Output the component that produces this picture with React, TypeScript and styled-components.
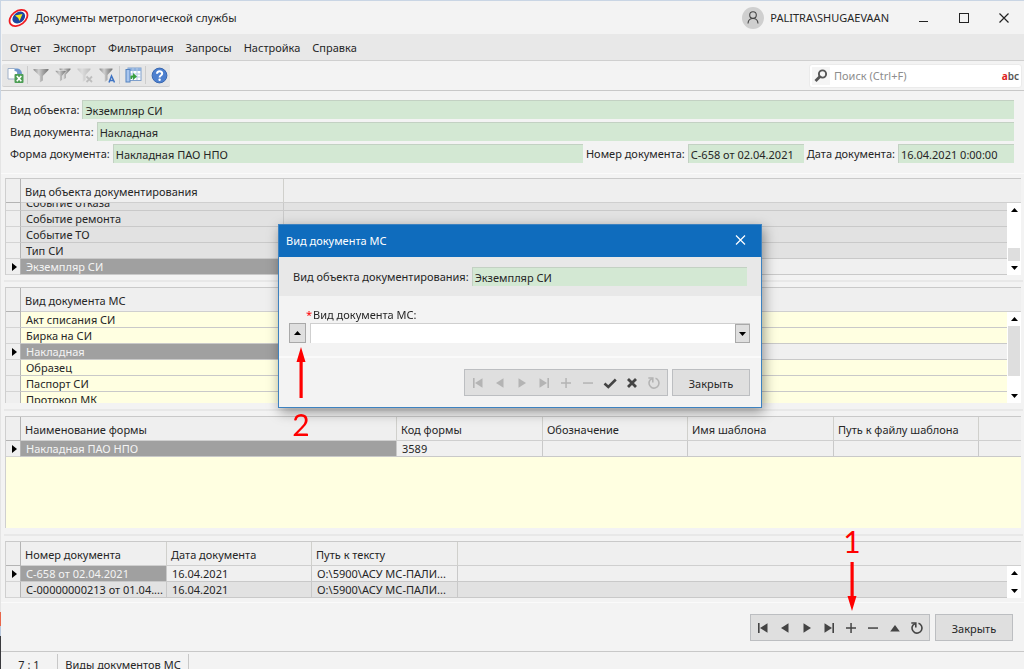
import React, { useLayoutEffect, useRef } from "react";
import styled, { createGlobalStyle, css } from "styled-components";

const font = `"Noto Sans", "Open Sans", sans-serif`;

const Global = createGlobalStyle`
  * { box-sizing: border-box; }
  html, body { margin: 0; padding: 0; height: 100%; overflow: hidden; }
  body { background: #f3f3f3; font-family: ${font}; font-size: 11px; line-height: 16px; color: #262626; }
  button, input, select { font: inherit; color: inherit; margin: 0; padding: 0; border: 0; border-radius: 0; background: none; outline: none; }
`;

const Desktop = styled.div`
  height: 100vh;
  overflow: hidden;
  position: relative;
  padding: 1px 0 0 1px;
  background: linear-gradient(#c9d5e4 0 100px, #e4e4e4 100px 612px, #e8664a 612px 626px, #b9c8dc 626px 636px, #3a3a3e 636px);
`;

const TopEdge = styled.div`
  position: absolute;
  inset: 0 0 auto 0;
  height: 1px;
  background: #c9d5e4;
`;

const Window = styled.div`
  display: flex;
  flex-direction: column;
  min-height: 100%;
  background: #f3f3f3;
  & > * { flex-shrink: 0; }
`;

const TitleBar = styled.header`
  display: flex;
  align-items: center;
  height: 33px;
  padding-left: 7px;
`;

const Title = styled.h1`
  margin: 0 auto 0 6px;
  font-size: 11px;
  font-weight: 400;
`;

const Avatar = styled.span`
  display: grid;
  place-items: center;
  width: 22px;
  height: 22px;
  margin-right: 6px;
  border-radius: 50%;
  background: #cfcfcf;
`;

const CaptionButton = styled.button`
  display: grid;
  place-items: center;
  width: 40px;
  height: 32px;
`;

const CaptionButtons = styled.div`
  display: flex;
  margin-left: 15px;
`;

const MenuBar = styled.nav`
  display: flex;
  align-items: center;
  gap: 12px;
  height: 27px;
  margin-left: 1px;
  padding: 2px 8px 0;
  background: #e8e8e8;
  border-bottom: 1px solid #cfcfcf;
  button { line-height: 20px; }
`;

const ToolRow = styled.div`
  display: flex;
  justify-content: space-between;
  align-items: center;
  height: 30px;
  padding: 0 2px 0 1px;
  border-bottom: 1px solid #c8c8c8;
`;

const ToolGroup = styled.div`
  display: flex;
  align-items: center;
  height: 23px;
  width: 168px;
  padding-left: 2px;
  border-radius: 2px;
  background: #e6e6e6;
  border-bottom: 1px solid #d0d0d0;
`;

const ToolButton = styled.button`
  display: grid;
  place-items: center;
  width: 22px;
  height: 22px;
  svg { display: block; }
`;

const ToolDivider = styled.span`
  width: 1px;
  height: 18px;
  margin: 0 2px 0 1px;
  background: #cdcdcd;
`;

const SearchBox = styled.label`
  display: flex;
  align-items: center;
  width: 213px;
  height: 24px;
  padding: 0 2px;
  border-radius: 3px;
  background: #fff;
  border: 1px solid #ebebeb;
`;

const SearchGlyph = styled.span`
  display: grid;
  place-items: center;
  width: 18px;
  height: 18px;
  margin-right: 4px;
  background: #f5f5f5;
`;

const SearchInput = styled.input`
  flex: 1;
  min-width: 0;
  height: 20px;
  &::placeholder { color: #8d8d8d; opacity: 1; }
`;

const Abc = styled.span`
  font-size: 10px;
  font-weight: 600;
  color: #555;
  b { color: #e02020; font-weight: 700; }
`;

const Summary = styled.section`
  display: flex;
  flex-direction: column;
  gap: 3px;
  height: 83px;
  padding: 9px 10px 0 9px;
  border-bottom: 1px solid #fafafa;
`;

const SummaryGap = styled.div`
  height: 4px;
`;

const FieldLine = styled.div`
  display: flex;
  gap: 3px;
`;

const FieldLabel = styled.label`
  height: 19px;
  line-height: 20px;
  white-space: nowrap;
`;

const ReadField = styled.input<{ $w?: number }>`
  ${(p) => (p.$w ? css`width: ${p.$w}px;` : css`flex: 1;`)}
  min-width: 0;
  height: 19px;
  padding: 0 2px;
  line-height: 16px;
  background: #d3e8d3;
  border: solid #c3d1c3;
  border-width: 1px 0 0 1px;
`;

const Splitter = styled.div<{ $h: number }>`
  display: flex;
  align-items: center;
  height: ${(p) => p.$h}px;
  padding: 0 1px 0 3px;
  &::after { content: ""; flex: 1; height: 2px; background: #e8e8e8; }
`;

const GridFrame = styled.section<{ $h: number; $grow?: boolean }>`
  display: flex;
  height: ${(p) => p.$h}px;
  ${(p) => p.$grow && css`flex: 1 0 ${p.$h}px;`}
  margin: 0 3px 0 4px;
  border-top: 1px solid #c9c9c9;
  border-left: 1px solid #cfcfcf;
`;

const GridView = styled.div<{ $bg: string }>`
  flex: 1;
  min-width: 0;
  overflow: hidden;
  background: ${(p) => p.$bg};
`;

const Table = styled.table`
  width: 100%;
  table-layout: fixed;
  border-collapse: separate;
  border-spacing: 0;
`;

const HeadCell = styled.th`
  position: sticky;
  top: 0;
  height: 24px;
  padding: 2px 4px 0;
  text-align: left;
  font-weight: 400;
  line-height: 16px;
  white-space: nowrap;
  background: #efefef;
  border-right: 1px solid #d0d0cc;
  border-bottom: 1px solid #cfcfcf;
  &:first-child { border-color: #b4b4b4; }
  &:last-child { border-right: 0; }
`;

const Cell = styled.td<{ $tone: string; $sel?: boolean }>`
  height: 16px;
  padding: 0 0 0 5px;
  line-height: 15px;
  overflow: hidden;
  white-space: nowrap;
  text-overflow: ellipsis;
  background: ${(p) => (p.$sel ? "#a0a0a0" : p.$tone)};
  color: ${(p) => (p.$sel ? "#f4f4f4" : "#262626")};
  border-bottom: 1px solid #c9c9c9;
  border-right: 1px solid #c9c9c9;
  &:last-child { border-right: 0; }
`;

const MarkCell = styled.td`
  padding: 0 0 0 6px;
  line-height: 0;
  background: #efefef;
  border-right: 1px solid #b4b4b4;
  border-bottom: 1px solid #d4d4d4;
`;

const Rail = styled.div`
  display: flex;
  flex-direction: column;
  width: 14px;
  background: #fff;
`;

const RailCap = styled.div`
  height: 24px;
  background: #efefef;
  border-bottom: 1px solid #cfcfcf;
`;

const RailButton = styled.button`
  display: grid;
  place-items: center;
  height: 14px;
`;

const RailTrack = styled.div<{ $end?: boolean }>`
  flex: 1;
  display: flex;
  flex-direction: column;
  justify-content: ${(p) => (p.$end ? "flex-end" : "flex-start")};
  padding: 0 1px;
`;

const RailThumb = styled.div<{ $h: number }>`
  height: ${(p) => p.$h}px;
  background: #dedede;
`;

const Footer = styled.footer`
  display: flex;
  justify-content: flex-end;
  gap: 5px;
  height: 50px;
  margin-top: 4px;
  padding: 11px 11px 0;
  border-top: 1px solid #fafafa;
  border-bottom: 1px solid #c8c8c8;
`;

const NavBar = styled.div<{ $pad: number }>`
  display: flex;
  align-items: center;
  height: 27px;
  padding: 0 ${(p) => p.$pad}px;
  background: #dfdfdf;
  border: 1px solid #bcbec1;
`;

const NavButton = styled.button`
  display: grid;
  place-items: center;
  width: 22px;
  height: 24px;
  color: #444;
  &:disabled { color: #b4b4b4; }
`;

const PushButton = styled.button`
  width: 78px;
  height: 27px;
  padding-top: 2px;
  text-align: center;
  background: #dfdfdf;
  border: 1px solid #bcbec1;
`;

const StatusBar = styled.div`
  display: flex;
  height: 27px;
  padding-top: 2px;
`;

const StatusItem = styled.span<{ $w: number }>`
  width: ${(p) => p.$w}px;
  padding-top: 2px;
  text-align: center;
  line-height: 18px;
  border-right: 1px solid #c8c8c8;
`;

const Dialog = styled.div`
  position: absolute;
  top: 224px;
  left: calc(50% - 234px);
  width: 484px;
  background: #f3f3f3;
  border: 1px solid #3d82c0;
  box-shadow: 2px 4px 12px rgba(0, 0, 0, 0.4);
`;

const DialogTitle = styled.div`
  display: flex;
  justify-content: space-between;
  align-items: center;
  height: 32px;
  padding: 0 12px 0 7px;
  background: #0f6cbd;
  color: #fff;
  h2 { margin: 0; font-size: 11px; font-weight: 400; }
`;

const DialogHead = styled.div`
  display: flex;
  gap: 3px;
  height: 39px;
  padding: 10px 14px 0;
  background: #e8e8e8;
`;

const DialogBody = styled.div`
  height: 62px;
  padding: 9px 11px 0 10px;
  border-bottom: 2px solid #fafafa;
`;

const RequiredLabel = styled.label`
  display: block;
  padding: 2px 0 0 17px;
  line-height: 16px;
  i { color: #f00; font-style: normal; margin-right: 1px; }
`;

const ComboLine = styled.div`
  display: flex;
  gap: 4px;
`;

const SmallButton = styled.button`
  display: grid;
  place-items: center;
  width: 17px;
  height: 20px;
  background: #dfdfdf;
  border: 1px solid #a9a9a9;
`;

const Combo = styled.div`
  position: relative;
  flex: 1;
  display: flex;
`;

const Select = styled.select`
  appearance: none;
  width: 100%;
  height: 20px;
  background: #fff;
  border: solid #cfcfcf;
  border-width: 1px 0 0 1px;
`;

const ComboArrow = styled.span`
  position: absolute;
  top: 1px;
  right: 0;
  display: grid;
  place-items: center;
  width: 15px;
  height: 19px;
  background: #dfdfdf;
  border: 1px solid #a9a9a9;
  pointer-events: none;
`;

const DialogFoot = styled.div`
  display: flex;
  justify-content: flex-end;
  gap: 4px;
  height: 49px;
  padding: 11px 11px 0;
`;

const Callout = styled.div<{ $top: number; $gap: number }>`
  position: absolute;
  top: ${(p) => p.$top}px;
  left: calc(50% - 221px);
  display: flex;
  flex-direction: column;
  align-items: center;
  gap: ${(p) => p.$gap}px;
  width: 20px;
  color: #f00;
  font-family: Lato, sans-serif;
  font-size: 30px;
  line-height: 32px;
  pointer-events: none;
`;

const CornerCallout = styled(Callout)`
  left: auto;
  right: 162px;
`;

const Up = () => (
  <svg width="7" height="4" viewBox="0 0 7 4"><path d="M0 4 3.5 0 7 4z" fill="#000" /></svg>
);
const Down = () => (
  <svg width="7" height="4" viewBox="0 0 7 4"><path d="M0 0h7L3.5 4z" fill="#000" /></svg>
);
const RowMark = () => (
  <svg width="5" height="8" viewBox="0 0 5 8"><path d="M0 0 5 4 0 8z" fill="#000" /></svg>
);

const navShapes: Record<string, React.ReactNode> = {
  first: <><path d="M3 3h1.6v10H3z" /><path d="M12.5 3.2v9.6L5 8z" /></>,
  prev: <path d="M11.5 3.2v9.6L4 8z" />,
  next: <path d="M4.5 3.2v9.6L12 8z" />,
  last: <><path d="M11.400 3H13v10h-1.600z" /><path d="M3.500 3.2v9.6L11 8z" /></>,
  plus: <path d="M7.300 3h1.5v4.300H13v1.5H8.800V13H7.300V8.800H3V7.300h4.300z" />,
  minus: <path d="M3 7.300h10v1.5H3z" />,
  up: <path d="M3.2 11.5h9.600L8 5z" />,
  check: <path d="M2.5 8.500 6.300 12 13.800 4.500" fill="none" stroke="currentColor" strokeWidth="2.6" />,
  cross: <path d="M4 4l8 8M12 4l-8 8" fill="none" stroke="currentColor" strokeWidth="2.8" />,
  refresh: (
    <g fill="none" stroke="currentColor" strokeWidth="1.6">
      <path d="M9.500 3.300A5 5 0 1 1 3.900 5.200L6 3.600" />
      <path d="M2.300 3h4.500v4.500" />
    </g>
  ),
};

const Nav = ({ kind, label, disabled }: { kind: string; label: string; disabled?: boolean }) => (
  <NavButton aria-label={label} disabled={disabled}>
    <svg width="16" height="16" viewBox="0 0 16 16" fill="currentColor">{navShapes[kind]}</svg>
  </NavButton>
);

const Funnel = ({ kind }: { kind: "plain" | "edit" | "clear" | "auto" }) => (
  <svg width="16" height="16" viewBox="0 0 16 16" opacity={kind === "clear" ? 0.35 : 1}>
    <defs>
      <linearGradient id={`f-${kind}`} x1="0" x2="1">
        <stop offset="0" stopColor="#8f8f8f" />
        <stop offset=".35" stopColor="#d0d0d0" />
        <stop offset=".6" stopColor="#a8a8a8" />
        <stop offset="1" stopColor="#757575" />
      </linearGradient>
    </defs>
    {kind === "plain" && <path d="M.5 2h15v1L9.800 9v4.500l-3 2V9L.5 3z" fill={`url(#f-${kind})`} />}
    {kind === "edit" && (
      <>
        <path d="M4.500 1.500h11v1L11 7.500v3.500l-2.500 1.500V7.500L4.500 2.500z" fill={`url(#f-${kind})`} />
        <path d="M.5 3.500h10.500v1L7.200 9v4l-2.700 2V9L.5 4.500z" fill={`url(#f-${kind})`} stroke="#ececec" strokeWidth=".5" />
      </>
    )}
    {(kind === "clear" || kind === "auto") && <path d="M.5 1.500h13v1L8.500 8v5l-2.800 2V8L.5 2.500z" fill={`url(#f-${kind})`} />}
    {kind === "clear" && <path d="M9.500 9.500l5.500 5.500M15 9.500 9.500 15" stroke="#777" strokeWidth="1.800" />}
    {kind === "auto" && <path d="M10 15.500 12.500 9l3 6.500M11 13.500h3.500" stroke="#3f74c4" strokeWidth="1.500" fill="none" />}
  </svg>
);

const AppLogo = () => (
  <svg width="21" height="20" viewBox="0 0 21 20">
    <g transform="rotate(-38 10.500 10)">
      <ellipse cx="10.500" cy="10" rx="10" ry="6.800" fill="#fff" stroke="#ee1c22" strokeWidth="1.800" />
      <ellipse cx="11" cy="9.800" rx="7" ry="5.200" fill="#1b47a0" />
    </g>
    <path d="M7 7.500 14.500 6l-3 7-1.300-3z" fill="#f6ee1c" />
  </svg>
);

const ExportIcon = () => (
  <svg width="17" height="17" viewBox="0 0 17 17">
    <path d="M1 1.500h6.500l3 3V12H1z" fill="#fff" stroke="#9fb0c8" />
    <path d="M7.500 1.500c5-.5 7.500 1.500 7.500 5.500h-4.500c0-2-1-3-3-3z" fill="#6f97cc" />
    <rect x="7.500" y="7" width="9" height="9" rx="1" fill="#4c9e54" />
    <path d="M9.800 9l4.500 5.200M14.300 9 9.800 14.200" stroke="#fff" strokeWidth="1.600" />
  </svg>
);

const GridIcon = () => (
  <svg width="17" height="16" viewBox="0 0 17 16">
    <rect x="3" y="1" width="13" height="12.500" fill="#fff" stroke="#7f9fcb" />
    <rect x="3" y="1" width="13" height="3" fill="#8fb1de" />
    <path d="M3 7h13M3 10h13M8 1v12M12 1v12" stroke="#b3c8e4" />
    <rect x="1" y="2.500" width="4" height="12.500" fill="#a9c6ee" stroke="#5483c0" />
    <path d="M5.500 12V8.500H8V6l4 3.500L8 13v-2.500H7V12z" fill="#38a03e" />
  </svg>
);

const HelpIcon = () => (
  <svg width="17" height="17" viewBox="0 0 17 17">
    <circle cx="8.500" cy="8.500" r="7.400" fill="#4d80cf" stroke="#3a68b0" />
    <path d="M6 6.800C6 3.500 11.200 3.500 11.200 6.600 11.200 8.600 8.600 8.500 8.600 10.400" fill="none" stroke="#fff" strokeWidth="2" />
    <circle cx="8.600" cy="12.700" r="1.200" fill="#fff" />
  </svg>
);

interface GridProps {
  height: number;
  grow?: boolean;
  name: string;
  cols: (number | null)[];
  heads: string[];
  rows: string[][];
  current: number;
  tone: string;
  thumb?: number;
  rail?: boolean;
  atEnd?: boolean;
}

const DataGrid = ({ height, grow, name, cols, heads, rows, current, tone, thumb, rail, atEnd }: GridProps) => {
  const view = useRef<HTMLDivElement>(null);
  useLayoutEffect(() => {
    if (atEnd && view.current) view.current.scrollTop = view.current.scrollHeight;
  }, [atEnd]);
  return (
    <GridFrame $h={height} $grow={grow}>
      <GridView ref={view} $bg={tone}>
        <Table aria-label={name}>
          <colgroup>
            {cols.map((w, i) => <col key={i} style={w ? { width: w } : undefined} />)}
          </colgroup>
          <thead>
            <tr>
              <HeadCell />
              {heads.map((h, i) => <HeadCell key={i}>{h}</HeadCell>)}
              <HeadCell />
            </tr>
          </thead>
          <tbody>
            {rows.map((r, y) => (
              <tr key={y}>
                <MarkCell>{y === current && <RowMark />}</MarkCell>
                {heads.map((_, x) => (
                  <Cell key={x} $tone={y === current ? "#f0f0f0" : tone} $sel={y === current && x === 0}>
                    {r[x]}
                  </Cell>
                ))}
                <Cell $tone={y === current ? "#f0f0f0" : tone} />
              </tr>
            ))}
          </tbody>
        </Table>
      </GridView>
      {rail && (
        <Rail>
          <RailCap />
          <RailButton aria-label="Вверх"><Up /></RailButton>
          <RailTrack $end={atEnd}>{thumb ? <RailThumb $h={thumb} /> : null}</RailTrack>
          <RailButton aria-label="Вниз"><Down /></RailButton>
        </Rail>
      )}
    </GridFrame>
  );
};

const menu = ["Отчет", "Экспорт", "Фильтрация", "Запросы", "Настройка", "Справка"];

export default function App() {
  return (
    <Desktop>
      <Global />
      <TopEdge />
      <Window>
        <TitleBar>
          <AppLogo />
          <Title>Документы метрологической службы</Title>
          <Avatar>
            <svg width="12" height="13" viewBox="0 0 12 13" fill="none" stroke="#444" strokeWidth="1.1">
              <circle cx="6" cy="4" r="3.300" />
              <path d="M1 12.500C1.200 9 3 7.500 6 7.500s4.800 1.500 5 5" />
            </svg>
          </Avatar>
          <span>PALITRA\SHUGAEVAAN</span>
          <CaptionButtons>
            <CaptionButton aria-label="Свернуть"><svg width="10" height="10" viewBox="0 0 10 10"><path d="M0 8.500h9" stroke="#222" /></svg></CaptionButton>
            <CaptionButton aria-label="Развернуть"><svg width="10" height="10" viewBox="0 0 10 10"><rect x=".5" y=".5" width="9" height="9" fill="none" stroke="#222" /></svg></CaptionButton>
            <CaptionButton aria-label="Закрыть окно"><svg width="10" height="10" viewBox="0 0 10 10"><path d="M.5.5l9 9M9.500.5l-9 9" stroke="#222" strokeWidth="1.2" /></svg></CaptionButton>
          </CaptionButtons>
        </TitleBar>
        <MenuBar>{menu.map((m) => <button key={m}>{m}</button>)}</MenuBar>
        <ToolRow>
          <ToolGroup>
            <ToolButton aria-label="Экспорт в Excel"><ExportIcon /></ToolButton>
            <ToolDivider />
            <ToolButton aria-label="Фильтр"><Funnel kind="plain" /></ToolButton>
            <ToolButton aria-label="Изменить фильтр"><Funnel kind="edit" /></ToolButton>
            <ToolButton aria-label="Снять фильтр"><Funnel kind="clear" /></ToolButton>
            <ToolButton aria-label="Автофильтр"><Funnel kind="auto" /></ToolButton>
            <ToolDivider />
            <ToolButton aria-label="Столбцы"><GridIcon /></ToolButton>
            <ToolDivider />
            <ToolButton aria-label="Помощь"><HelpIcon /></ToolButton>
          </ToolGroup>
          <SearchBox>
            <SearchGlyph>
              <svg width="14" height="14" viewBox="0 0 14 14" fill="none" stroke="#555">
                <circle cx="8.500" cy="5" r="3.600" strokeWidth="1.9" />
                <path d="M6 7.500 1.500 12" strokeWidth="2.8" />
              </svg>
            </SearchGlyph>
            <SearchInput aria-label="Поиск" placeholder="Поиск (Ctrl+F)" />
            <Abc><b>a</b>bc</Abc>
          </SearchBox>
        </ToolRow>
        <Summary>
          <FieldLine>
            <FieldLabel htmlFor="obj">Вид объекта:</FieldLabel>
            <ReadField id="obj" readOnly value="Экземпляр СИ" />
          </FieldLine>
          <FieldLine>
            <FieldLabel htmlFor="kind">Вид документа:</FieldLabel>
            <ReadField id="kind" readOnly value="Накладная" />
          </FieldLine>
          <FieldLine>
            <FieldLabel htmlFor="form">Форма документа:</FieldLabel>
            <ReadField id="form" readOnly value="Накладная ПАО НПО" />
            <FieldLabel htmlFor="num">Номер документа:</FieldLabel>
            <ReadField id="num" $w={116} readOnly value="С-658 от 02.04.2021" />
            <FieldLabel htmlFor="date">Дата документа:</FieldLabel>
            <ReadField id="date" $w={116} readOnly value="16.04.2021 0:00:00" />
          </FieldLine>
        </Summary>
        <SummaryGap />
        <DataGrid
          name="Объекты документирования" height={97} rail atEnd thumb={13}
          cols={[15, 263, null]} heads={["Вид объекта документирования"]}
          rows={[["Событие отказа"], ["Событие ремонта"], ["Событие ТО"], ["Тип СИ"], ["Экземпляр СИ"]]}
          current={4} tone="#e2e2e2"
        />
        <Splitter $h={12} />
        <DataGrid
          name="Виды документов" height={116} rail thumb={50}
          cols={[15, 263, null]} heads={["Вид документа МС"]}
          rows={[["Акт списания СИ"], ["Бирка на СИ"], ["Накладная"], ["Образец"], ["Паспорт СИ"], ["Протокол МК"]]}
          current={2} tone="#ffffe1"
        />
        <Splitter $h={13} />
        <DataGrid
          name="Формы" height={112} grow
          cols={[15, 376, 146, 145, 146, 145, null]}
          heads={["Наименование формы", "Код формы", "Обозначение", "Имя шаблона", "Путь к файлу шаблона"]}
          rows={[["Накладная ПАО НПО", "3589"]]}
          current={0} tone="#ffffe1"
        />
        <Splitter $h={13} />
        <DataGrid
          name="Документы" height={57} rail
          cols={[15, 146, 145, 146, null]}
          heads={["Номер документа", "Дата документа", "Путь к тексту"]}
          rows={[
            ["С-658 от 02.04.2021", "16.04.2021", "O:\\5900\\АСУ МС-ПАЛИ..."],
            ["С-00000000213 от 01.04....", "16.04.2021", "O:\\5900\\АСУ МС-ПАЛИ..."],
          ]}
          current={0} tone="#e2e2e2"
        />
        <Footer>
          <NavBar $pad={1}>
            <Nav kind="first" label="Первая" />
            <Nav kind="prev" label="Предыдущая" />
            <Nav kind="next" label="Следующая" />
            <Nav kind="last" label="Последняя" />
            <Nav kind="plus" label="Добавить" />
            <Nav kind="minus" label="Удалить" />
            <Nav kind="up" label="Изменить" />
            <Nav kind="refresh" label="Обновить" />
          </NavBar>
          <PushButton>Закрыть</PushButton>
        </Footer>
        <StatusBar>
          <StatusItem $w={57}>7 : 1</StatusItem>
          <StatusItem $w={131}>Виды документов МС</StatusItem>
        </StatusBar>
      </Window>

      <Dialog role="dialog" aria-labelledby="dlg">
        <DialogTitle>
          <h2 id="dlg">Вид документа МС</h2>
          <button aria-label="Закрыть диалог">
            <svg width="17" height="10" viewBox="0 0 17 10"><path d="M4 .5l9 9M13 .5l-9 9" stroke="#fff" strokeWidth="1.2" /></svg>
          </button>
        </DialogTitle>
        <DialogHead>
          <FieldLabel htmlFor="dobj">Вид объекта документирования:</FieldLabel>
          <ReadField id="dobj" readOnly value="Экземпляр СИ" />
        </DialogHead>
        <DialogBody>
          <RequiredLabel htmlFor="dkind"><i>*</i>Вид документа МС:</RequiredLabel>
          <ComboLine>
            <SmallButton aria-label="Выбрать из списка"><Up /></SmallButton>
            <Combo>
              <Select id="dkind" defaultValue=""><option value="" /></Select>
              <ComboArrow><Down /></ComboArrow>
            </Combo>
          </ComboLine>
        </DialogBody>
        <DialogFoot>
          <NavBar $pad={2}>
            <Nav kind="first" label="Первая" disabled />
            <Nav kind="prev" label="Предыдущая" disabled />
            <Nav kind="next" label="Следующая" disabled />
            <Nav kind="last" label="Последняя" disabled />
            <Nav kind="plus" label="Добавить" disabled />
            <Nav kind="minus" label="Удалить" disabled />
            <Nav kind="check" label="Сохранить" />
            <Nav kind="cross" label="Отменить" />
            <Nav kind="refresh" label="Обновить" disabled />
          </NavBar>
          <PushButton>Закрыть</PushButton>
        </DialogFoot>
      </Dialog>

      <Callout $top={347} $gap={10}>
        <svg width="10" height="51" viewBox="0 0 10 51"><path d="M5 0l4.500 15H6.700v36H3.500V15H.5z" fill="#f00" /></svg>
        <span>2</span>
      </Callout>
      <CornerCallout $top={525} $gap={5}>
        <span>1</span>
        <svg width="10" height="49" viewBox="0 0 10 49"><path d="M3.500 0h3.200v34h2.800L5 49 .5 34h3z" fill="#f00" /></svg>
      </CornerCallout>
    </Desktop>
  );
}
